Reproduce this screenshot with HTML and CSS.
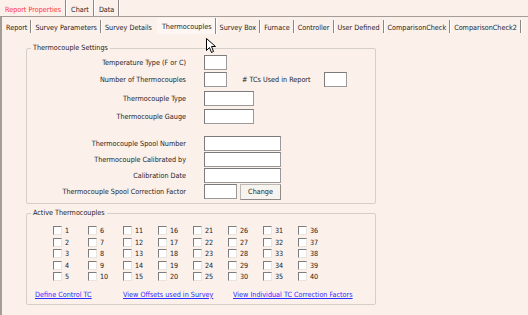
FILE: index.html
```html
<!DOCTYPE html>
<html>
<head>
    <title>Report Properties - Thermocouples</title>
    <meta charset="UTF-8">
    <link rel="stylesheet" href="styles.css">
</head>
<body>
    <div class="window">
        <div class="outer-tabs">
            <span class="otab selected">Report Properties</span>
            <span class="otab">Chart</span>
            <span class="otab">Data</span>
        </div>
        <div class="page">
            <div class="inner-tabs">
                <span class="itab">Report</span>
                <span class="itab">Survey Parameters</span>
                <span class="itab before-current">Survey Details</span>
                <span class="itab current">Thermocouples</span>
                <span class="itab">Survey Box</span>
                <span class="itab">Furnace</span>
                <span class="itab">Controller</span>
                <span class="itab">User Defined</span>
                <span class="itab">ComparisonCheck</span>
                <span class="itab">ComparisonCheck2</span>
            </div>
            <div class="panel">
                <fieldset class="group settings">
                    <legend>Thermocouple Settings</legend>
                    <div class="row gap-first">
                        <label>Temperature Type (F or C)</label>
                        <input type="text" class="box-s">
                    </div>
                    <div class="row gap-2">
                        <label>Number of Thermocouples</label>
                        <input type="text" class="box-s">
                        <span class="inline-label">#&nbsp;TCs Used in Report</span>
                        <input type="text" class="box-s">
                    </div>
                    <div class="row gap-4">
                        <label>Thermocouple Type</label>
                        <input type="text" class="box-m">
                    </div>
                    <div class="row gap-3">
                        <label>Thermocouple Gauge</label>
                        <input type="text" class="box-m">
                    </div>
                    <div class="row gap-12">
                        <label>Thermocouple Spool Number</label>
                        <input type="text" class="box-l">
                    </div>
                    <div class="row gap-1">
                        <label>Thermocouple Calibrated by</label>
                        <input type="text" class="box-l">
                    </div>
                    <div class="row gap-1">
                        <label>Calibration Date</label>
                        <input type="text" class="box-l">
                    </div>
                    <div class="row gap-1">
                        <label>Thermocouple Spool Correction Factor</label>
                        <input type="text" class="box-cf">
                        <button type="button" class="btn">Change</button>
                    </div>
                </fieldset>
                <fieldset class="group active">
                    <legend>Active Thermocouples</legend>
                    <div class="tc-grid" id="tcGrid"></div>
                    <div class="links">
                        <a href="#">Define Control TC</a>
                        <a href="#">View Offsets used in Survey</a>
                        <a href="#">View Individual TC Correction Factors</a>
                    </div>
                </fieldset>
            </div>
        </div>
        <svg class="cursor" width="11" height="17" viewBox="0 0 11 17">
            <path d="M0.5 0.5 L0.5 12.5 L3.5 9.5 L5.5 14.5 L7.5 13.5 L5.5 8.5 L9.5 8.5 Z" fill="#fff" stroke="#000" stroke-width="1"/>
        </svg>
    </div>
    <script>
        const grid = document.getElementById('tcGrid');
        for (let i = 1; i <= 40; i++) {
            const item = document.createElement('label');
            item.className = 'tc';
            item.innerHTML = `<span class="check"></span><span>${i}</span>`;
            grid.appendChild(item);
        }
    </script>
</body>
</html>
```

FILE: styles.css
```css
body {
    margin: 0;
    background-color: #fcf0eb;
    font-family: "DejaVu Sans Condensed", "DejaVu Sans", sans-serif;
    font-stretch: condensed;
    font-size: 7.2px;
    color: #222222;
}
.window {
    position: relative;
    width: 528px;
    height: 315px;
    overflow: hidden;
}
.outer-tabs {
    display: flex;
    height: 16px;
    border-bottom: 1px solid #a39c97;
}
.otab {
    display: flex;
    align-items: center;
    padding: 2px 4px 0 5px;
    border-right: 1px solid #8c8784;
    box-shadow: 1px 0 0 #ffffff;
}
.otab.selected {
    color: #ff3434;
}
.page {
    border-left: 2px solid #a29d99;
    height: 298px;
}
.inner-tabs {
    display: flex;
    height: 17px;
    padding-top: 1px;
    box-sizing: border-box;
}
.itab {
    display: flex;
    align-items: center;
    padding: 1px 3px 0 4px;
    margin: 2px 0 1px;
    border-right: 1px solid #8c8784;
    box-shadow: 1px 0 0 #ffffff;
}
.itab.before-current {
    border-right: none;
    box-shadow: none;
    padding-right: 5px;
}
.itab.current {
    margin: 0;
    padding: 1px 3px 0 5px;
    background-color: #fdf6f3;
    border-right: 1px solid #8c8784;
}
.panel {
    padding-left: 24px;
}
.group {
    width: 350px;
    box-sizing: border-box;
    margin: 0;
    padding: 0;
    border: 1px solid #d5cfca;
    border-radius: 2px;
}
.group legend {
    margin-left: 4px;
    padding: 0 2px;
    line-height: 10px;
}
.settings {
    margin-top: 9px;
    padding: 2px 0 4px;
}
.row {
    display: flex;
    align-items: center;
    height: 15px;
}
.row label {
    width: 159px;
    margin-right: 18px;
    text-align: right;
}
.gap-first { margin-top: 0; }
.gap-1 { margin-top: 1px; }
.gap-2 { margin-top: 2px; }
.gap-3 { margin-top: 3px; }
.gap-4 { margin-top: 4px; }
.gap-12 { margin-top: 12px; }
input {
    height: 15px;
    box-sizing: border-box;
    margin: 0;
    padding: 0;
    background: #ffffff;
    border: 1px solid #9a9a9a;
    border-top-color: #7b7b7b;
    border-left-color: #7b7b7b;
}
.box-s { width: 23px; }
.box-m { width: 50px; }
.box-l { width: 77px; }
.box-cf { width: 33px; }
.inline-label {
    margin: 0 13px 0 15px;
}
.btn {
    margin-left: 3px;
    width: 41px;
    height: 16px;
    padding: 0;
    font: inherit;
    color: #222222;
    background: #f7f3ee;
    border: 1px solid #bdb8b3;
    border-right-color: #8f8a86;
    border-bottom-color: #8f8a86;
}
.active {
    margin-top: 4px;
    padding: 8px 0 4px;
}
.tc-grid {
    display: grid;
    grid-auto-flow: column;
    grid-template-rows: repeat(5, 11.5px);
    grid-template-columns: repeat(8, 35px);
    padding-left: 26px;
}
.tc {
    display: flex;
    align-items: flex-start;
    gap: 3px;
    line-height: 9px;
}
.check {
    width: 9px;
    height: 9px;
    box-sizing: border-box;
    background: #ffffff;
    border: 1px solid #e8e4e0;
    border-top-color: #7d7d7d;
    border-left-color: #7d7d7d;
}
.links {
    display: grid;
    grid-template-columns: 88px 110px auto;
    margin: 6px 0 0 8px;
    line-height: 10px;
}
.links a {
    color: #2b2bff;
    text-decoration: underline;
}
.cursor {
    position: absolute;
    left: 206px;
    top: 38px;
}
```
